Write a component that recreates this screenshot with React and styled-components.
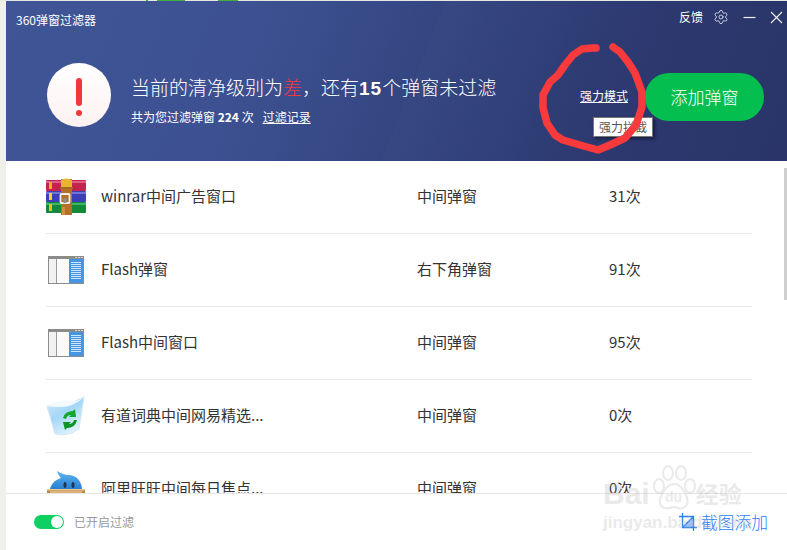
import styled, { createGlobalStyle } from "styled-components";
import { Settings } from "lucide-react";

const rows = [
  { id: 1, icon: "winrar", name: "winrar中间广告窗口", type: "中间弹窗", count: "31次" },
  { id: 2, icon: "flash", name: "Flash弹窗", type: "右下角弹窗", count: "91次" },
  { id: 3, icon: "flash", name: "Flash中间窗口", type: "中间弹窗", count: "95次" },
  { id: 4, icon: "bin", name: "有道词典中间网易精选...", type: "中间弹窗", count: "0次" },
  { id: 5, icon: "wangwang", name: "阿里旺旺中间每日焦点...", type: "中间弹窗", count: "0次" },
];

function WinrarIcon() {
  return (
    <svg width="40" height="40" viewBox="0 0 40 40">
      <rect x="0" y="3" width="40" height="11" rx="1" fill="#c4224f" />
      <rect x="0" y="14" width="40" height="11" rx="1" fill="#3c3fb8" />
      <rect x="0" y="25" width="40" height="11" rx="1" fill="#128a3a" />
      <rect x="0" y="4" width="40" height="2" fill="#e0607f" />
      <rect x="0" y="15" width="40" height="2" fill="#6f73dc" />
      <rect x="0" y="26" width="40" height="2" fill="#3fb565" />
      <rect x="3" y="5" width="3" height="7" fill="#f2b21c" />
      <rect x="3" y="16" width="3" height="7" fill="#f4d32c" />
      <rect x="3" y="27" width="3" height="7" fill="#e8c020" />
      <rect x="15" y="2" width="11" height="36" fill="#b5712a" />
      <rect x="16" y="30" width="3" height="8" fill="#cf8d45" />
      <path d="M15 11 L15 3 Q20 0 26 3 L26 11 Z" fill="#e8b52c" />
      <rect x="14" y="10" width="13" height="2" fill="#a5681f" />
      <rect x="14.5" y="17" width="9" height="9" rx="1" fill="none" stroke="#eeeeee" strokeWidth="1.8" />
      <rect x="17.5" y="21" width="3" height="5" fill="#8a8f96" />
    </svg>
  );
}

function FlashIcon() {
  const lines = [12, 14, 16, 18, 20, 22, 24, 26, 28];
  return (
    <svg width="40" height="40" viewBox="0 0 40 40">
      <rect x="2.5" y="6.5" width="35" height="27" fill="#fafafa" stroke="#8b8b8b" />
      <rect x="2" y="6" width="36" height="3" fill="#8b8b8b" />
      <rect x="10" y="9" width="1" height="24" fill="#9a9a9a" />
      <rect x="3" y="9" width="7" height="24" fill="#f1f1f1" />
      <rect x="23" y="9" width="14" height="24" fill="#4596e2" />
      {lines.map(y => <rect key={y} x="25" y={y} width="10" height="1" fill="#cfe5fa" />)}
      <rect x="29" y="7" width="2" height="1" fill="#d5d5d5" />
      <rect x="32" y="7" width="2" height="1" fill="#d5d5d5" />
      <rect x="35" y="7" width="2" height="1" fill="#d5d5d5" />
    </svg>
  );
}

function BinIcon() {
  return (
    <svg width="40" height="40" viewBox="0 0 40 40">
      <defs>
        <linearGradient id="binFill" x1="0" y1="0" x2="0.6" y2="1">
          <stop offset="0" stopColor="#d6ecfb" />
          <stop offset="0.5" stopColor="#a3d7f8" />
          <stop offset="1" stopColor="#e2f3fd" />
        </linearGradient>
      </defs>
      <path d="M1 10 Q18 12 38 1 L33 33 Q22 41 9 38 Z" fill="url(#binFill)" stroke="#d3e6f3" />
      <path d="M1 10 Q12 3 25 5 Q32 6 38 1 Q28 11 14 11 Q7 11 1 10 Z" fill="#f2faff" />
      <path d="M17 22 Q19 15 27 15 L29 13 L30 21 L23 21 L25 19 Q21 19 20 23 Z" fill="#12a62c" />
      <path d="M31 24 Q29 32 21 32 L19 34 L17 26 L25 26 L23 28 Q27 28 28 24 Z" fill="#0d9426" />
    </svg>
  );
}

function WangwangIcon() {
  return (
    <svg width="40" height="40" viewBox="0 0 40 40">
      <defs>
        <linearGradient id="dropFill" x1="0" y1="0" x2="0" y2="1">
          <stop offset="0" stopColor="#5fb6f2" />
          <stop offset="1" stopColor="#1b72c9" />
        </linearGradient>
      </defs>
      <path d="M11 2 Q18 6 22 6 C31 6 37 13 36 24 L4 24 C3 17 8 11 15 9 Q12 6 11 2 Z" fill="url(#dropFill)" />
      <ellipse cx="19" cy="16" rx="1.5" ry="3" fill="#17365c" />
      <ellipse cx="27" cy="16" rx="1.5" ry="3" fill="#17365c" />
      <rect x="1" y="20" width="38" height="20" fill="#b9854a" />
      <rect x="1" y="20" width="38" height="1.5" fill="#e9c893" />
      <rect x="4" y="22" width="32" height="18" fill="#dcb27a" />
    </svg>
  );
}

function RowIcon({ kind }) {
  if (kind === "winrar") return <WinrarIcon />;
  if (kind === "flash") return <FlashIcon />;
  if (kind === "bin") return <BinIcon />;
  return <WangwangIcon />;
}

export default function App() {
  return (
    <Page>
      <GlobalStyle />
      <TopStrip />
      <Main>
        <Header>
          <TitleBar>
            <AppTitle>360弹窗过滤器</AppTitle>
            <TitleTools>
              <Feedback>反馈</Feedback>
              <Settings size={16} strokeWidth={1.3} color="#dfe3ef" />
              <svg width="13" height="13" viewBox="0 0 13 13">
                <path d="M0.5 6.5H12.5" stroke="#f0f2f8" strokeWidth="1.2" />
              </svg>
              <svg width="13" height="13" viewBox="0 0 13 13">
                <path d="M1 1L12 12M12 1L1 12" stroke="#f0f2f8" strokeWidth="1.1" />
              </svg>
            </TitleTools>
          </TitleBar>
          <Banner>
            <AlertCircle>
              <AlertBar />
              <AlertDot />
            </AlertCircle>
            <Summary>
              <Headline>
                当前的清净级别为<Bad>差</Bad>，还有<b>15</b>个弹窗未过滤
              </Headline>
              <SubLine>
                共为您过滤弹窗 <b>224</b> 次<LogLink>过滤记录</LogLink>
              </SubLine>
            </Summary>
            <Actions>
              <StrongLink>强力模式</StrongLink>
              <AddButton>添加弹窗</AddButton>
            </Actions>
          </Banner>
        </Header>

        <List>
          {rows.map(row => (
            <Row key={row.id}>
              <IconBox><RowIcon kind={row.icon} /></IconBox>
              <Name>{row.name}</Name>
              <Kind>{row.type}</Kind>
              <Count>{row.count}</Count>
            </Row>
          ))}
          <ScrollThumb />
        </List>

        <Footer>
          <Toggle><Knob /></Toggle>
          <ToggleLabel>已开启过滤</ToggleLabel>
          <Capture>
            <svg width="18" height="18" viewBox="0 0 18 18">
              <path d="M3.5 14.5L14.5 3.5V14.5Z" fill="#9cc3fa" />
              <path d="M3.5 0V14.5H18M0 3.5H14.5V18M3.5 14.5L14.5 3.5" fill="none" stroke="#2a7cf6" strokeWidth="1.3" />
            </svg>
            截图添加
          </Capture>
        </Footer>
      </Main>

      <Tooltip>强力拦截</Tooltip>
      <Scribble width="787" height="550" viewBox="0 0 787 550">
        <path
          d="M596 48 L592 48 L582 49 L573 55 L565 65 L558 75 L550 82 L543 95 L543 108 L547 123 L555 135 L563 140 L580 145 L598 150 L610 145 L625 138 L636 125 L642 107 L642 92 L635 73 L628 62 L620 52 L613 47"
          fill="none"
          stroke="#f93a3c"
          strokeWidth="7.5"
          strokeLinecap="round"
          strokeLinejoin="round"
        />
      </Scribble>

      <Watermark>
        <MarkTop>
          <span>Bai</span>
          <svg width="46" height="46" viewBox="0 0 46 46">
            <g fill="none" stroke="#bbbbbb" strokeWidth="2">
              <ellipse cx="8" cy="21" rx="5" ry="7" />
              <ellipse cx="17" cy="8" rx="5" ry="7" />
              <ellipse cx="30" cy="8" rx="5" ry="7" />
              <ellipse cx="39" cy="21" rx="5" ry="7" />
              <path d="M23 19 C31 19 40 34 35 41 C30 46 27 42 23 42 C19 42 15 46 10 41 C6 34 15 19 23 19 Z" />
            </g>
            <text x="14" y="37" fontSize="14" fontFamily="Liberation Sans" fill="#bbbbbb">du</text>
          </svg>
          <MarkCjk>经验</MarkCjk>
        </MarkTop>
        <MarkUrl>jingyan.baidu.com</MarkUrl>
      </Watermark>
    </Page>
  );
}

const GlobalStyle = createGlobalStyle`
    html, body {
        margin: 0;
        padding: 0;
        background-color: #fff;
        overflow: hidden;
    }
    * {
        box-sizing: border-box;
    }
`

const Page = styled.div`
    width: 787px;
    height: 550px;
    position: relative;
    overflow: hidden;
    display: flex;
    flex-direction: column;
    padding-left: 6px;
    background-color: #f0f0e9;
    font-family: "Noto Sans CJK SC", "Liberation Sans", sans-serif;
`

const TopStrip = styled.div`
    height: 1px;
    margin-left: -6px;
    flex-shrink: 0;
    background: linear-gradient(90deg,
        #e8e8e2 146px, #3fae3f 146px, #3fae3f 148px,
        #e8e8e2 148px, #e8e8e2 157px, #3fae3f 157px, #3fae3f 185px,
        #e8e8e2 185px, #e8e8e2 218px, #3fae3f 218px, #3fae3f 238px,
        #e8e8e2 238px);
`

const Main = styled.div`
    flex: 1;
    min-height: 0;
    display: flex;
    flex-direction: column;
    background-color: #fff;
`

const Header = styled.header`
    height: 160px;
    flex-shrink: 0;
    display: flex;
    flex-direction: column;
    color: #fff;
    background:
        linear-gradient(112deg, transparent 52%, rgba(255, 255, 255, 0.012) 52%, transparent 72%),
        linear-gradient(112deg, #3f5596 0%, #3d5192 30%, #33447f 55%, #2c386e 80%, #2a3468 100%);
`

const TitleBar = styled.div`
    height: 32px;
    flex-shrink: 0;
    display: flex;
    align-items: center;
    justify-content: space-between;
    padding: 0 4px 0 10px;
`

const AppTitle = styled.span`
    font-size: 12px;
    color: #fff;
    padding-top: 4px;
`

const TitleTools = styled.div`
    display: flex;
    align-items: center;
    gap: 14px;
`

const Feedback = styled.span`
    font-size: 12px;
    margin-right: -4px;
    padding-bottom: 2px;
`

const Banner = styled.div`
    flex: 1;
    display: flex;
    align-items: center;
    padding: 0 23px 4px 41px;
`

const AlertCircle = styled.div`
    width: 64px;
    height: 64px;
    flex-shrink: 0;
    border-radius: 50%;
    background: linear-gradient(180deg, #ffffff 0%, #fdf1f1 100%);
    display: flex;
    flex-direction: column;
    align-items: center;
    padding-top: 15px;
    gap: 4px;
`

const AlertBar = styled.div`
    width: 6px;
    height: 28px;
    border-radius: 3px;
    background-color: #f0383c;
`

const AlertDot = styled.div`
    width: 6px;
    height: 6px;
    border-radius: 50%;
    background-color: #f0383c;
`

const Summary = styled.div`
    margin: 8px 0 0 20px;
    display: flex;
    flex-direction: column;
    gap: 7px;
`

const Headline = styled.div`
    font-size: 19px;
    line-height: 26px;
    font-weight: 300;
    white-space: nowrap;
    & b {
        font-weight: 700;
        font-family: "Liberation Sans", sans-serif;
        letter-spacing: 1px;
    }
`

const Bad = styled.span`
    color: #f5393c;
`

const SubLine = styled.div`
    font-size: 12px;
    line-height: 16px;
    white-space: nowrap;
    & b {
        font-weight: 700;
    }
`

const LogLink = styled.span`
    margin-left: 9px;
    text-decoration: underline;
`

const Actions = styled.div`
    margin-left: auto;
    display: flex;
    align-items: center;
    gap: 17px;
    padding-top: 4px;
`

const StrongLink = styled.span`
    font-size: 12px;
    color: #fff;
    text-decoration: underline;
    margin-top: -4px;
`

const AddButton = styled.button`
    width: 119px;
    height: 48px;
    border: 0;
    border-radius: 24px;
    background-color: #04bf50;
    color: #fff;
    font-family: inherit;
    font-size: 17px;
    font-weight: 300;
    padding: 0 0 2px;
`

const List = styled.div`
    flex: 1;
    min-height: 0;
    overflow: hidden;
    position: relative;
    padding: 0 35px 0 40px;
`

const Row = styled.div`
    height: 73px;
    display: flex;
    align-items: center;
    border-bottom: 1px solid #e8e8e8;
    font-size: 15px;
    color: #333;
`

const IconBox = styled.div`
    width: 40px;
    height: 40px;
    flex-shrink: 0;
    margin-right: 15px;
    & svg {
        display: block;
    }
`

const Name = styled.div`
    width: 316px;
    white-space: nowrap;
    padding-bottom: 3px;
`

const Kind = styled.div`
    width: 192px;
    white-space: nowrap;
    padding-bottom: 3px;
`

const Count = styled.div`
    white-space: nowrap;
    padding-bottom: 3px;
`

const ScrollThumb = styled.div`
    position: absolute;
    top: 7px;
    right: 0;
    width: 3px;
    height: 132px;
    background-color: #cfcfcf;
`

const Footer = styled.footer`
    height: 57px;
    flex-shrink: 0;
    display: flex;
    align-items: center;
    border-top: 1px solid #e6e6e6;
    padding: 0 19px 0 28px;
    background-color: #fff;
`

const Toggle = styled.div`
    width: 30px;
    height: 14px;
    border-radius: 7px;
    background-color: #0cd062;
    display: flex;
    justify-content: flex-end;
    align-items: center;
    padding-right: 1px;
`

const Knob = styled.div`
    width: 12px;
    height: 12px;
    border-radius: 50%;
    background-color: #fff;
`

const ToggleLabel = styled.span`
    margin-left: 10px;
    font-size: 12px;
    color: #999;
    padding-bottom: 2px;
`

const Capture = styled.div`
    margin-left: auto;
    display: flex;
    align-items: center;
    gap: 4px;
    font-size: 16.75px;
    font-weight: 300;
    color: #2a7cf6;
`

const Tooltip = styled.div`
    position: absolute;
    left: 593px;
    top: 117px;
    width: 60px;
    height: 20px;
    background-color: #fff;
    border: 1px solid #767676;
    box-shadow: 2px 2px 3px rgba(10, 15, 40, 0.6);
    font-size: 12px;
    line-height: 18px;
    text-align: center;
    color: #555;
`

const Scribble = styled.svg`
    position: absolute;
    left: 0;
    top: 0;
    pointer-events: none;
`

const Watermark = styled.div`
    position: absolute;
    left: 603px;
    top: 465px;
    display: flex;
    flex-direction: column;
    opacity: 0.3;
    color: #bbb;
    pointer-events: none;
`

const MarkTop = styled.div`
    display: flex;
    align-items: flex-end;
    height: 46px;
    font-family: "Liberation Sans", sans-serif;
    font-size: 30px;
    font-weight: 700;
    line-height: 34px;
    gap: 1px;
`

const MarkCjk = styled.span`
    font-family: "Noto Sans CJK SC", sans-serif;
    font-size: 23px;
    line-height: 36px;
    margin-left: -2px;
`

const MarkUrl = styled.div`
    font-family: "Liberation Sans", sans-serif;
    font-size: 17px;
    font-weight: 700;
    line-height: 20px;
    margin-top: 2px;
`
